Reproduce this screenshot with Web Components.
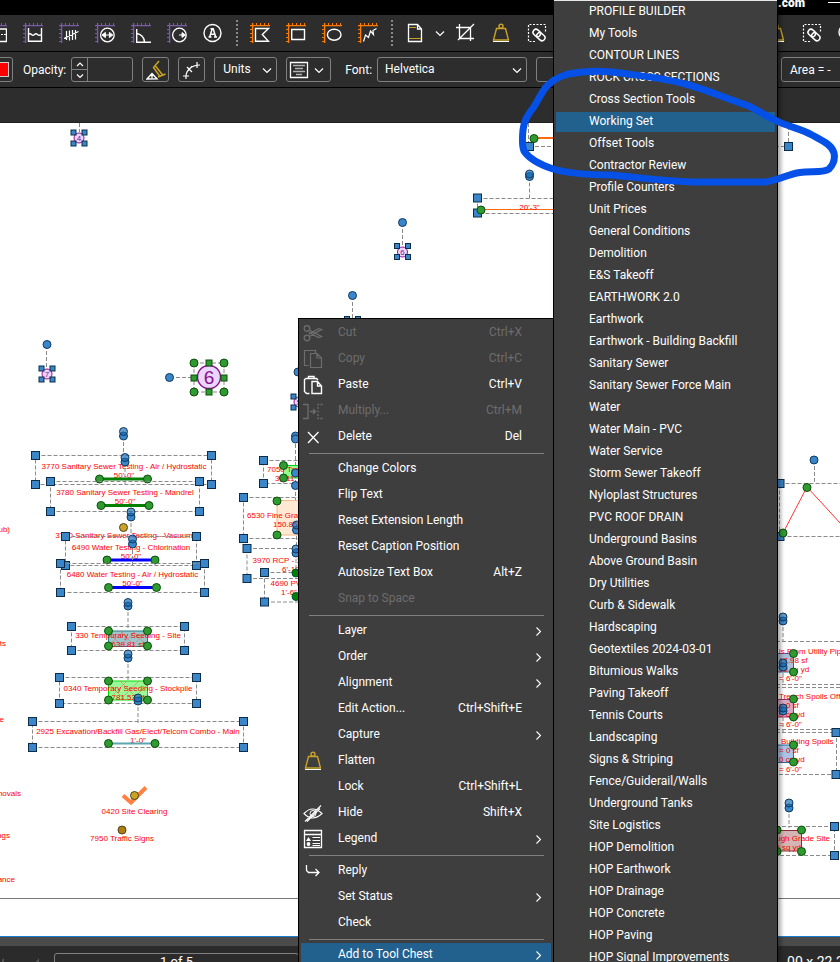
<!DOCTYPE html>
<html lang="en">
<head>
<meta charset="utf-8">
<title>Markup editor</title>
<style>
html,body{margin:0;height:100%;overflow:hidden;background:#2d2d2d}
body{font-family:Roboto,"Liberation Sans",sans-serif;font-size:12px;color:#fff}
</style>
</head>
<body>
<app-window>
  <title-bar slot="title">.com</title-bar>
  <tool-strip slot="tools"></tool-strip>
  <property-bar slot="props"></property-bar>
  <plan-canvas slot="canvas"></plan-canvas>
  <status-bar slot="status"></status-bar>
  <context-menu slot="overlay"></context-menu>
  <tool-chest-menu slot="overlay"></tool-chest-menu>
  <ink-note slot="overlay"></ink-note>
</app-window>
<script>
const ruler = c => `<path stroke="${c}" stroke-width="1.4" d="M0 2.6H20M2.6 0V20"/><path stroke="${c}" d="M6.5 0V3M10.5 0V3M14.5 0V3M18.5 0V3M0 6.5H3M0 10.5H3M0 14.5H3M0 18.5H3"/>`;
const P = '#7a5aa6', O = '#ff7a00', G = '#c9a227';
const weight = `<path stroke="${G}" stroke-width="1.4" d="M5.5 5.5h9l3 11.5h-15z"/><circle cx="10" cy="3.2" r="2" stroke="${G}" stroke-width="1.4"/><path d="M2 18.5h16"/>`;
const ICONS = {
  dynamic: ruler(P) + '<path stroke-width="1.4" d="M5 6H19.5V18.5H5"/><path stroke-dasharray="2 1" d="M5 11.5H19"/>',
  volume: ruler(P) + '<path stroke-width="1.4" d="M5.5 5V18.3H18.5V5M5.5 11.5q1.5-1.5 3 0t3 0t3 0t4 0"/>',
  count: ruler(P) + '<path stroke-width="1.2" d="M7.5 8V17M10.5 7.5V17.5M13.5 7V17M16.5 7V16.5M5 15.5L19.5 8.5"/>',
  diameter: ruler(P) + '<circle cx="12.4" cy="12" r="6.8" stroke-width="1.3"/><path fill="#fff" d="M7 12l3.4-2.6V14.6zM17.8 12l-3.4-2.6V14.6z"/><path d="M9 12h7"/>',
  angle: ruler(P) + '<path stroke-width="1.4" d="M5.7 6V19.3H20M5.7 10.5A9 9 0 0 1 13.5 19"/>',
  radius: ruler(P) + '<circle cx="12.4" cy="12" r="6.8" stroke-width="1.3"/><path fill="#fff" d="M18.5 12l-3.5-2.4V14.4z"/><path d="M12 12h4"/>',
  autoA: '<circle cx="9.5" cy="10" r="8.5" stroke-width="1.4"/><path stroke-width="1.5" d="M6.7 14L9.2 5.8h1L12.7 14M7.8 11.2h4M5.5 14h3M11 14h3M7.5 5.8h2.5"/>',
  poly: ruler(O) + '<path stroke-width="1.4" d="M5.5 5.5H18.5L12.3 11.5L18.5 18.3H5.5z"/>',
  rect: ruler(O) + '<path stroke-width="1.4" d="M5.7 6.5H18.5V16.5H5.7z"/>',
  ellipse: ruler(O) + '<ellipse cx="12.2" cy="11.7" rx="6.8" ry="5.5" stroke-width="1.4"/>',
  curve: ruler(O) + '<path stroke-width="1.2" d="M5.5 18.500L7.500 12L10.500 14.500L12.500 8L15.500 11.500L15 7.500L18.500 5.500"/>',
  page: `<path stroke-width="1.3" d="M3.5 1.500H12.500L16.500 6V18.500H3.500zM12.500 1.500V6H16.500"/><path stroke="${G}" d="M4 4.500H11M4 15.500H16"/>`,
  chev: '<path stroke-width="1.2" d="M6 8.500L10 12.500L14 8.500"/>',
  up: '<path stroke-width="1.2" d="M7 12L10 9L13 12"/>',
  down: '<path stroke-width="1.2" d="M7 8.500L10 11.500L13 8.500"/>',
  next: '<path stroke-width="1.1" d="M8.500 6.500L12.500 10.500L8.500 14.500"/>',
  crop: '<path stroke-width="1.3" d="M1 4.500H15.500V18M4.500 1V15.500H19M3 17L19 1"/>',
  weight,
  link: '<path stroke-dasharray="2 1.500" stroke-width="1.2" d="M8 18.500H1.500V1.500H18.500V9"/><g transform="rotate(42 12 12)" stroke-width="1.500"><rect x="5" y="9" width="8" height="6" rx="3"/><rect x="10" y="9" width="9" height="6" rx="3"/></g>',
  fill: `<path stroke="${G}" stroke-width="1.500" d="M13 1L7.500 7.500L14 16.500M9.500 6L17 15.500M12 17l7.500-3"/><path stroke-width="1.400" d="M1 19L6 13.500L11 18.800zM6 14v4"/>`,
  arc: '<path stroke-width="1.200" d="M4 19c-1-8 5-14 14-14M1 16h6M15 2v6M5 7l5 5M10 6l-4 5"/>',
  align: '<path stroke-width="1.300" d="M1.500 2.500H18.500V17.500H1.500z"/><path stroke="#b4b4b4" stroke-width="1.500" d="M4 5.500h12M6 8.500h8M4 11.500h12M7 14.500h6"/>',
  cut: '<g stroke-width="1.300"><circle cx="4" cy="5.500" r="2.800"/><circle cx="4" cy="15" r="2.800"/><path d="M6.300 7L18.500 13.500l-3 1L6 9.500M6.300 13.500L18.500 6.500l-3-.800L6 11"/></g>',
  copy: '<path stroke-width="1.200" d="M5.500 16.500H1.500V1.500H12.500V4M7.500 4.500H14L18.500 9V18.500H7.500zM14 4.500V9H18.500"/>',
  paste: '<path stroke-width="1.400" d="M6.500 18.500H3.500L1.500 16.500V4.500L3 3.500H5.500V1.500H11V3.500H13.500L15 5M5.500 3.500H11M9 6.500H14.500L18.500 11V18.500H9zM14.500 6.500V11H18.500"/>',
  multiply: '<path stroke-width="1.300" d="M0 3.500H5V17.500H0M7 10.500H12M10 8l2.500 2.500L10 13"/><path stroke-dasharray="2 1.500" stroke-width="1.300" d="M19.500 3.500H15V17.500H19.500"/>',
  del: '<path stroke-width="1.300" d="M5 5L15.500 16M15.500 5L5 16"/>',
  hide: '<path stroke-width="1.100" d="M1 10.500Q9.500 1.500 19 10.500Q9.500 19.500 1 10.500zM2 18.500L18 2.500M4 18.500L17 5.500"/><circle cx="10" cy="10.500" r="3"/>',
  legend: '<path stroke-width="1.300" d="M1.500 1.500H18.500V18.500H1.500zM1.500 5.500H18.500"/><path d="M9.500 8.500H17M9.500 11.500H17M9.500 14.500H17M9.500 16.500H17"/><path fill="#fff" stroke="none" d="M3 12L5.500 8L8 12z"/><circle cx="5.500" cy="15" r="1.900" fill="#fff" stroke="none"/>',
  reply: '<path stroke-width="1.300" d="M3.500 4V9.500L5.500 11.500H15.500M12.500 8l3.500 3.500l-3.500 3.500"/>',
  more: '<circle cx="8" cy="9" r="7" stroke-width="1.400"/>'
};
const define = (name, html, setup) => customElements.define(name, class extends HTMLElement {
  constructor() { super(); this.attachShadow({mode: 'open'}); }
  connectedCallback() {
    if (this.shadowRoot.firstChild) return;
    const t = document.createElement('template');
    t.innerHTML = typeof html === 'function' ? html(this) : html;
    this.shadowRoot.append(t.content.cloneNode(true));
    if (setup) setup(this);
  }
});

define('ui-icon', el => `<style>:host{display:block;width:20px;height:20px;flex:none;pointer-events:none}svg{display:block;fill:none;stroke:currentColor}</style>
<svg width="20" height="20" viewBox="0 0 20 20" aria-hidden="true">${ICONS[el.getAttribute('name')] || ''}</svg>`);

define('app-window', `<style>
:host{display:grid;grid-template-rows:15px 37px 36px 34px 1fr 25px;height:100vh;position:relative;overflow:hidden;background:#2d2d2d}
.gap{background:#2d2d2d}
</style><slot name="title"></slot><slot name="tools"></slot><slot name="props"></slot><div class="gap"></div><slot name="canvas"></slot><slot name="status"></slot><slot name="overlay"></slot>`);

define('title-bar', `<style>:host{display:flex;justify-content:flex-end;align-items:flex-start;background:#000;font-weight:700;line-height:14px;overflow:hidden;gap:23px}
b{margin-top:-4px}i{width:12px;height:1px;margin-top:2px;background:#fff}</style><b><slot></slot></b><i></i>`);

const tool = (n, label) => `<button type="button" aria-label="${label}"><ui-icon name="${n}"></ui-icon></button>`;
define('tool-strip', `<style>
:host{display:flex;justify-content:space-between;align-items:center;background:#2d2d2d;border-bottom:1px solid #000;overflow:hidden}
div{display:flex;align-items:center;gap:16px;flex:none}
.left{gap:0;margin-left:-13px}.right{position:relative;margin-right:-18px;background:#2d2d2d}
.pair{gap:9px}
button{all:unset;width:20px;height:20px;display:flex;justify-content:center}
.narrow{width:12px}
hr{margin:0 12px 0 13px;border:0;border-left:2px dotted #8a8a8a;height:26px}
</style>
<div class="left"><div>${tool('dynamic','Dynamic fill')}${tool('volume','Volume')}${tool('count','Count')}${tool('diameter','Diameter')}${tool('angle','Angle')}${tool('radius','Radius')}${tool('autoA','Auto text')}</div><hr>
<div>${tool('poly','Polygon cutout')}${tool('rect','Rectangle')}${tool('ellipse','Ellipse')}${tool('curve','Sketch')}</div><hr>
<div class="pair">${tool('page','Page')}<button class="narrow" type="button" aria-label="Page options"><ui-icon name="chev"></ui-icon></button><div>${tool('crop','Crop')}${tool('weight','Flatten')}${tool('link','Link')}</div></div></div>
<div class="right">${tool('weight','Flatten markups')}${tool('link','Batch link')}${tool('more','More')}</div>`);

define('property-bar', `<style>
:host{display:flex;align-items:center;justify-content:space-between;background:#2d2d2d;border-bottom:1px solid #000;overflow:hidden}
div{display:flex;align-items:center;flex:none}
.left{gap:9px;margin-left:-15px}
label{margin-right:-4px}label[for=op]{margin-left:1px}label[for=ft]{margin-left:5px}
.box,button.box{box-sizing:border-box;height:25px;border:1px solid #808080;border-radius:3px;background:transparent;color:#fff;font:inherit;padding:0;display:flex;align-items:center;justify-content:center;overflow:hidden}
.sw{width:28px}.sw i{width:18px;height:13px;background:red;border:1px solid #ccc}
.spin{width:62px}.spin div{flex-direction:column;width:15px;height:23px;border-right:1px solid #808080}
.spin button{all:unset;width:15px;height:11px;display:flex;align-items:center;justify-content:center}
.spin button+button{border-top:1px solid #808080}
.spin ui-icon{margin:0 -3px}
input{all:unset;width:44px}
.ic{width:27px}
.sel{position:relative;justify-content:flex-end}
select{all:unset;position:absolute;inset:0;padding-left:8px;box-sizing:border-box;line-height:23px}
.ft select{padding-left:7px}
.un{width:63px}.al{width:45px;padding:0 2px!important;justify-content:space-between!important}.ft{width:150px}.cut{width:60px}
.area{width:76px;justify-content:flex-start!important;padding-left:8px!important;margin-right:-17px}
.sel ui-icon{margin-right:-1px}
</style>
<div class="left"><button class="box sw" type="button" aria-label="Colour"><i></i></button>
<label for="op">Opacity:</label><div class="box spin"><div><button type="button" aria-label="Increase"><ui-icon name="up"></ui-icon></button><button type="button" aria-label="Decrease"><ui-icon name="down"></ui-icon></button></div><input id="op" type="text"></div>
<button class="box ic" type="button" aria-label="Highlight fill"><ui-icon name="fill"></ui-icon></button>
<button class="box ic" type="button" aria-label="Curve"><ui-icon name="arc"></ui-icon></button>
<div class="box sel un"><select aria-label="Units"><option>Units</option></select><ui-icon name="chev"></ui-icon></div>
<button class="box al" type="button" aria-label="Alignment"><ui-icon name="align"></ui-icon><ui-icon name="chev"></ui-icon></button>
<label for="ft">Font:</label><div class="box sel ft"><select id="ft"><option>Helvetica</option></select><ui-icon name="chev"></ui-icon></div>
<div class="box cut"></div></div>
<button class="box area" type="button">Area = -</button>`);

const menuCss = `
:host{position:absolute;box-sizing:border-box;background:#3e3e3e;border:1px solid #000;display:flex;flex-direction:column}
button{all:unset;box-sizing:border-box;display:flex;align-items:center;color:#fff;flex:none}
`;
const CONTEXT = [
  ['Cut','Ctrl+X','cut',1],['Copy','Ctrl+C','copy',1],['Paste','Ctrl+V','paste'],['Multiply...','Ctrl+M','multiply',1],['Delete','Del','del'],null,
  ['Change Colors'],['Flip Text'],['Reset Extension Length'],['Reset Caption Position'],['Autosize Text Box','Alt+Z'],['Snap to Space','','',1],null,
  ['Layer','>'],['Order','>'],['Alignment','>'],['Edit Action...','Ctrl+Shift+E'],['Capture','>'],['Flatten','','weight'],['Lock','Ctrl+Shift+L'],['Hide','Shift+X','hide'],['Legend','>','legend'],null,
  ['Reply','','reply'],['Set Status','>'],['Check'],null,['Add to Tool Chest','>','',0,1]];
define('context-menu', `<style>${menuCss}
:host{left:298px;top:318px;width:256px}
button{height:26px;padding:0 31px 0 4px}
button:disabled{color:#6d6d6d}
.slot{width:35px;margin-top:2px}.label{flex:1}
.sub{padding-right:5px}.sub>ui-icon{margin-top:1px}
.on{background:linear-gradient(#3e3e3e 2px,#22618e 2px);margin:0 2px;padding-left:2px;padding-right:3px}
hr{height:1px;border:0;background:#808080;margin:4px 9px 1px 10px;flex:none}
</style>` + CONTEXT.map(i => {
  if (!i) return '<hr>';
  const [label, key, icon, off, on] = i, sub = key === '>';
  return `<button type="button" role="menuitem" class="${sub ? 'sub' : ''} ${on ? 'on' : ''}"${off ? ' disabled' : ''}><span class="slot">${icon ? `<ui-icon name="${icon}"></ui-icon>` : ''}</span><span class="label">${label}</span>${sub ? '<ui-icon name="next"></ui-icon>' : key ? `<span>${key}</span>` : ''}</button>`;
}).join(''), el => el.setAttribute('role', 'menu'));

const CHEST = ['PROFILE BUILDER','My Tools','CONTOUR LINES','ROCK CROSS SECTIONS','Cross Section Tools','Working Set','Offset Tools','Contractor Review','Profile Counters','Unit Prices','General Conditions','Demolition','E&amp;S Takeoff','EARTHWORK 2.0','Earthwork','Earthwork - Building Backfill','Sanitary Sewer','Sanitary Sewer Force Main','Water','Water Main - PVC','Water Service','Storm Sewer Takeoff','Nyloplast Structures','PVC ROOF DRAIN','Underground Basins','Above Ground Basin','Dry Utilities','Curb &amp; Sidewalk','Hardscaping','Geotextiles 2024-03-01','Bitumious Walks','Paving Takeoff','Tennis Courts','Landscaping','Signs &amp; Striping','Fence/Guiderail/Walls','Underground Tanks','Site Logistics','HOP Demolition','HOP Earthwork','HOP Drainage','HOP Concrete','HOP Paving','HOP Signal Improvements'];
define('tool-chest-menu', `<style>${menuCss}
:host{left:553px;top:0;width:225px;bottom:0;overflow:hidden;border-width:0 1px;box-shadow:3px 0 4px #0005}
button{height:22px;padding-left:35px}
.on{background:linear-gradient(#3e3e3e 2px,#22618e 2px);margin:0 2px;padding-left:33px}
:host::before{content:"";position:absolute;left:0;right:0;top:0;height:1px;background:#e8e8e8}
</style>` + CHEST.map(t => `<button type="button" role="menuitem"${t === 'Working Set' ? ' class="on"' : ''}>${t}</button>`).join(''), el => el.setAttribute('role', 'menu'));

/* Plan drawing helpers: each returns SVG for one kind of mark. */
const sq = (x, y, s = 8, f = '#3a86c8', k = '#0d2c48') => `<rect x="${x - s / 2}" y="${y - s / 2}" width="${s}" height="${s}" fill="${f}" stroke="${k}"/>`;
const dot = (x, y, f = '#3a86c8', k = '#0d3a63') => `<circle cx="${x}" cy="${y}" r="4" fill="${f}" stroke="${k}"/>`;
const gr = (x, y) => dot(x, y, '#2f9a2f', '#0c4f0c');
const dash = d => `<path d="${d}" fill="none" stroke="#8a8a8a" stroke-dasharray="4 2"/>`;
const box = (x1, y1, x2, y2) => dash(`M${x1} ${y1}H${x2}V${y2}H${x1}Z`);
const corners = (x1, y1, x2, y2, s) => sq(x1, y1, s) + sq(x2, y1, s) + sq(x1, y2, s) + sq(x2, y2, s);
const rot = (x, y1, y2, y3) => dash(`M${x} ${y2}V${y3}`) + dot(x, y2) + `<circle cx="${x}" cy="${y1}" r="4" fill="#1769b0aa" stroke="#0d3a63"/>`;
const t = (x, y, s, a = 'middle') => `<text x="${x}" y="${y + 3}" text-anchor="${a}">${s}</text>`;
const ln = (x1, x2, y, c, w = 2) => `<path d="M${x1} ${y}H${x2}" stroke="${c}" stroke-width="${w}"/>`;
const area = (x, y, w, h, f, k) => `<rect x="${x}" y="${y}" width="${w}" height="${h}" fill="${f}" stroke="${k}"/>`;
const bub = (x, y, n) => `<circle cx="${x}" cy="${y}" r="5" fill="#ead6ff" stroke="#9a109a"/><text class="n" x="${x}" y="${y + 3}" text-anchor="middle">${n}</text>`;
const run = (x1, x2, y, c) => ln(x1, x2, y, c, 3) + gr(x1, y) + gr(x2, y);

const PLAN = [
  '<path d="M0 898.5H2000" stroke="#777"/>',
  dash('M79.5 123V132'), bub(79, 138, 4), corners(73.500, 132.500, 84.500, 143.500, 5),
  dash('M402.500 223V248'), dot(402.500, 222.500), bub(402.500, 252, 6), corners(397, 246, 408, 257, 5),
  dash('M352.500 296V318'), dot(352.500, 295.500), sq(347, 319, 5), sq(358, 319, 5),
  dash('M46.500 345V368'), dot(47, 344.500), bub(47, 374, 7), corners(41.500, 368.500, 52.500, 379.500, 5),
  dot(298, 372), bub(299, 402, 5), sq(293.500, 396.500, 5), sq(293.500, 407.500, 5),
  box(194, 363, 224, 392), dash('M170 377.500H194'), dot(169.500, 377.500),
  '<circle cx="209" cy="377" r="11.500" fill="#ead6ff" stroke="#8a108a" stroke-width="1.400"/><text class="big" x="209" y="384" text-anchor="middle">6</text>',
  gr(194, 363), gr(224, 363), gr(194, 392), gr(224, 392),
  sq(209, 363, 6, '#2f9a2f', '#0c4f0c'), sq(194, 378, 6, '#2f9a2f', '#0c4f0c'), sq(224, 378, 6, '#2f9a2f', '#0c4f0c'), sq(209, 392, 6, '#2f9a2f', '#0c4f0c'),
  /* sanitary and water testing */
  box(35.500, 455.500, 211.500, 484.500), t(124, 466, '3770 Sanitary Sewer Testing - Air / Hydrostatic'), t(124, 475, `50'-0"`), run(99.500, 147.500, 479, '#008000'), corners(35.500, 455.500, 211.500, 484.500),
  box(50.500, 481.500, 199.500, 511.500), t(125, 492, '3780 Sanitary Sewer Testing - Mandrel'), t(125, 501, `50'-0"`), run(101, 149, 505.500, '#008000'), corners(50.500, 481.500, 199.500, 511.500),
  rot(123.500, 431.500, 436, 455), rot(125, 457.500, 462, 484),
  t(124, 535, '3790 Sanitary Sewer Testing - Vacuum'), dot(123.500, 527.500, '#c9a227', '#4a4520'),
  box(65.500, 536.500, 196.500, 565.500), t(131, 547, '6490 Water Testing - Chlorination'), t(131, 556, `50'-0"`), run(107, 155, 560, '#0000ff'), corners(65.500, 536.500, 196.500, 565.500),
  box(60.500, 563.500, 204.500, 592.500), t(132.500, 574, '6480 Water Testing - Air / Hydrostatic'), t(132.500, 583, `50'-0"`), run(108.500, 156.500, 587.500, '#0000ff'), corners(60.500, 563.500, 204.500, 592.500),
  rot(131, 512, 517, 536), rot(132.500, 539, 544, 566),
  /* seeding */
  box(71.500, 626.500, 184.500, 650.500), area(108.500, 631, 39, 15.500, '#9cc8cc', '#1b8088'), '<path d="M108 646L124 631M120 646L136 631M132 646L147 632M108 632L122 646M120 631L135 646M132 631L147 645" stroke="#d08080" stroke-width=".7"/>', t(128, 635, '330 Temporary Seeding - Site'), t(128, 644, '639.81 sf'), gr(108.500, 631), gr(147.500, 631), gr(108.500, 646), gr(147.500, 646), corners(71.500, 626.500, 184.500, 650.500),
  rot(128, 602.500, 606, 628),
  box(59.500, 677.500, 196.500, 703.500), area(108.500, 681, 39, 19, '#98fb98', '#00e000'), '<path d="M108 700L127 681M120 700L139 681M132 700L147 685M108 683L125 700M120 681L139 700" stroke="#d09060" stroke-width=".7"/>', t(128, 687.500, '0340 Temporary Seeding - Stockpile'), t(128, 696.500, '781.53 sf'), gr(108.500, 681), gr(147.500, 681), gr(108.500, 700), gr(147.500, 700), corners(59.500, 677.500, 196.500, 703.500),
  rot(128, 654, 658, 680),
  box(32.500, 721.500, 243.500, 747.500), t(138, 731, '2925 Excavation/Backfill Gas/Elect/Telcom Combo - Main'), t(138, 740, `1'-0"`), ln(108.500, 155, 743.500, '#5aa7b0'), gr(108.500, 743.500), gr(155, 743.500), corners(32.500, 721.500, 243.500, 747.500),
  rot(138, 698, 701, 723),
  '<path d="M123 795.500L131 802.500L146 787.500" fill="none" stroke="#ff8040" stroke-width="4"/>', dot(134.500, 795.500, '#c9a227', '#4a4520'), t(134.500, 811, '0420 Site Clearing'),
  dot(122, 830, '#b07d10', '#4a4520'), t(122, 838, '7950 Traffic Signs'),
  t(10, 529, 'ub)', 'end'), t(6, 643, 'ts', 'end'), t(4, 719, 'e', 'end'), t(21, 793, 'movals', 'end'), t(10, 835, 'ngs', 'end'), t(15, 879, 'ance', 'end'),
  /* marks beside the open menu */
  box(263.500, 460.500, 330, 483.500), area(283.500, 465.500, 40, 12.500, '#90ff90', '#00d020'), t(267, 468.500, '7050 Tan', 'start'), t(275, 478, '3,511', 'start'), sq(263.500, 460.500), sq(263.500, 483.500), gr(283.500, 465.500), gr(283.500, 478),
  dash('M295.500 438V508'), dot(295.500, 436), dot(295.500, 439), dot(295.500, 473), dot(295.500, 485.500),
  box(243.500, 497.500, 330, 538.500), area(277, 500.500, 40, 34.500, '#ffe8d4', '#f5b98a'), t(247, 515, '6530 Fine Gra', 'start'), t(273, 524, '150.85', 'start'), sq(243.500, 497.500), sq(243.500, 538.500), gr(277, 501), gr(277, 535),
  rot(296.500, 525, 530, 548),
  box(247, 548.500, 330, 578.500), t(252.500, 560, '3970 RCP - 1', 'start'), t(282, 569, `6'-10"`, 'start'), sq(247, 548.500), sq(247, 578.500),
  box(264.500, 572.500, 330, 602), t(270.500, 583, '4690 PVC', 'start'), t(281, 592, `1'-6"`, 'start'), sq(264.500, 572.500), sq(264.500, 602),
  rot(296, 549, 553, 572), dot(296, 573, '#008000', '#053'), dot(296, 596.500, '#008000', '#053'),
  /* top right */
  box(528.500, 110, 788.500, 146.500), ln(534, 560, 138, '#ff6a13'), sq(529.500, 146.500), sq(788.500, 146.500), gr(534, 138.500),
  box(477.500, 198.500, 560, 213.500), ln(481, 560, 209.500, '#ff6a13', 1), t(529.500, 206.500, `20'-3"`), sq(477.500, 198), sq(477.500, 213), gr(481, 210),
  rot(529.500, 174, 176.500, 198),
  /* right edge */
  box(779.500, 483.500, 900, 536.500), dash('M814.500 460V483'), dot(814, 460), '<path d="M783 533L807 487L841 524" fill="none" stroke="#f33"/>', sq(780, 483.500), sq(780, 536.500), gr(783, 533), gr(807, 487.500),
  dash('M770 641.500H900M770 684.500H900M770 687.500H900M770 729.500H900M770 732.500H836.500V774.500H770M770 826.500H834.500V855.500H770'),
  area(770, 653.500, 23.500, 18.500, '#a9bfda', '#2b6aa0'), area(770, 699.500, 23.500, 17.500, '#d9a9c4', '#a02b6a'), area(770, 745, 23.500, 17.500, '#a9c4e8', '#2b6aa0'), area(770, 830.500, 31.500, 20.500, '#d4b4b4', '#8a3030'),
  t(779, 650.500, 'ls From Utility Pip', 'start'), t(779, 659.500, '17.98 sf', 'start'), t(779, 669, '99 cu yd', 'start'), t(779, 678, `= 6'-0"`, 'start'),
  t(779, 696, 'Trench Spoils Off', 'start'), t(779, 705, '= 0 sf', 'start'), t(779, 714, '0 cu yd', 'start'), t(779, 723.500, `= 6'-0"`, 'start'),
  t(781, 741, 'Building Spoils', 'start'), t(779, 750, '= 0 sf', 'start'), t(779, 759, '0 cu yd', 'start'), t(779, 768.500, `= 6'-0"`, 'start'),
  t(830, 838, 'ugh Grade Site', 'end'), t(801, 847, '0 sq yd', 'end'),
  gr(793.500, 653.500), gr(793.500, 672), gr(793.500, 699), gr(793.500, 717), gr(793.500, 745), gr(793.500, 762), gr(801.500, 830), gr(801.500, 851.500), gr(777, 830), gr(777, 851.500),
  rot(783, 617, 621, 642), rot(783, 663, 667, 684), rot(783, 708, 711, 732), rot(789, 803, 808, 828),
  sq(836, 732.500), sq(836, 774.500), sq(834.500, 826.500), sq(834.500, 855.500)
].join('');
define('plan-canvas', `<style>
:host{display:block;background:#fff;overflow:hidden;border-top:1px solid #222;border-bottom:1px solid #1a7fd0;min-height:0;box-sizing:border-box}
svg{display:block;width:100%;height:100%}
text{font:8px "Liberation Sans",Arial,sans-serif;fill:#f00}
.n{font-size:8px;fill:#8a108a}.big{font-size:19px;fill:#8a108a}
</style><svg><g transform="translate(0 -123)">${PLAN}</g></svg>`);

define('status-bar', `<style>
:host{display:flex;align-items:flex-start;justify-content:space-between;background:#2b2b2b;border-top:9px solid #4b4b4b;box-sizing:border-box;overflow:hidden}
div{display:flex;gap:14px;padding:7px 0 0 2px;color:#555;align-items:flex-start}
svg{display:block;margin-top:5px}
input{all:unset;box-sizing:border-box;width:245px;height:24px;border:1px solid #808080;border-radius:3px;text-align:center;color:#fff;font-size:13px;line-height:14px;padding-bottom:8px}
span{font-size:14px;line-height:16px;margin:8px -4px 0 0;white-space:nowrap}
</style><div><svg width="38" height="8" aria-hidden="true"><path d="M-4 6l6-6v12zM32 6l5-6v12z" fill="#555"/></svg><input aria-label="Page" value="1 of 5"></div><span>.00 x 22.2</span>`);

define('ink-note', `<style>:host{position:absolute;left:0;top:0;width:840px;height:200px;pointer-events:none}svg{display:block}</style>
<svg width="840" height="200" aria-hidden="true"><path fill="none" stroke="#0550e6" stroke-width="7" stroke-linejoin="round" stroke-linecap="round" d="M546 87C541 93 538 101 533 108C527 116 524 121 523 130C522 140 522 146 524 151C530 160 541 165 553 169C570 174 590 175 612 175C635 177 660 181 692 182H765C779 180 788 174 800 172.500C812 171 824 173 829 169C834 164 835 158 834 153C832 145 823 141 812 135C800 128 788 127 775 120C765 116 757 109 746 105C722 97 702 88 685 84C668 79 650 77 628 74C605 70 583 71 568 74C558 77 552 80 546 87Z"/></svg>`);
</script>
</body>
</html>
